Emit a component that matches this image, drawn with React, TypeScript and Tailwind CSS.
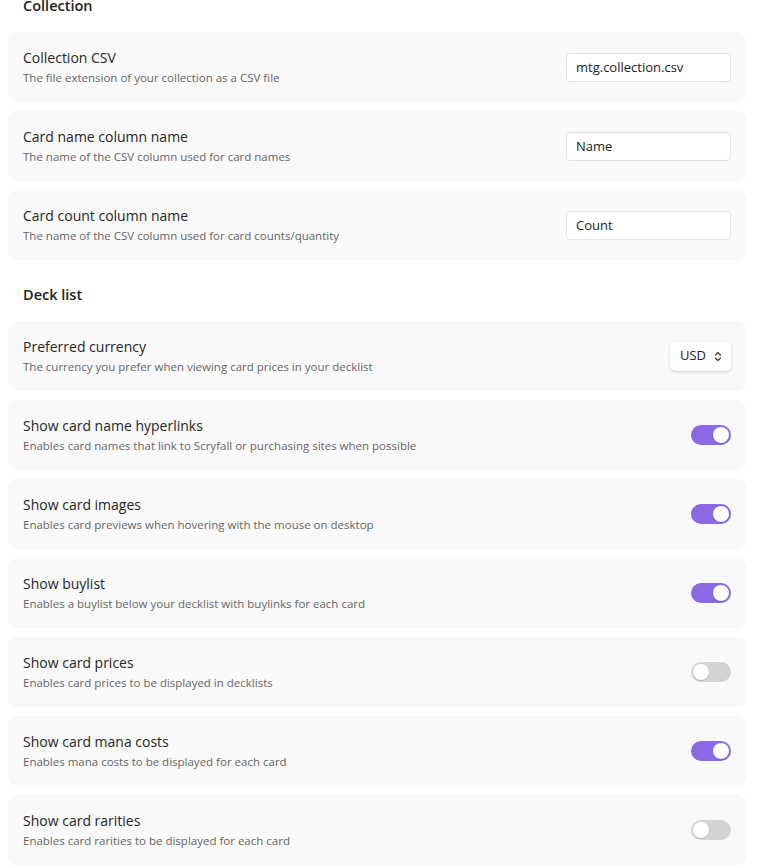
import { useState } from 'react';

type Row =
  | { kind: 'text'; title: string; desc: string; value: string }
  | { kind: 'select'; title: string; desc: string; value: string }
  | { kind: 'toggle'; title: string; desc: string; on: boolean };

const collectionRows: Row[] = [
  { kind: 'text', title: 'Collection CSV', desc: 'The file extension of your collection as a CSV file', value: 'mtg.collection.csv' },
  { kind: 'text', title: 'Card name column name', desc: 'The name of the CSV column used for card names', value: 'Name' },
  { kind: 'text', title: 'Card count column name', desc: 'The name of the CSV column used for card counts/quantity', value: 'Count' },
];

const deckRows: Row[] = [
  { kind: 'select', title: 'Preferred currency', desc: 'The currency you prefer when viewing card prices in your decklist', value: 'USD' },
  { kind: 'toggle', title: 'Show card name hyperlinks', desc: 'Enables card names that link to Scryfall or purchasing sites when possible', on: true },
  { kind: 'toggle', title: 'Show card images', desc: 'Enables card previews when hovering with the mouse on desktop', on: true },
  { kind: 'toggle', title: 'Show buylist', desc: 'Enables a buylist below your decklist with buylinks for each card', on: true },
  { kind: 'toggle', title: 'Show card prices', desc: 'Enables card prices to be displayed in decklists', on: false },
  { kind: 'toggle', title: 'Show card mana costs', desc: 'Enables mana costs to be displayed for each card', on: true },
  { kind: 'toggle', title: 'Show card rarities', desc: 'Enables card rarities to be displayed for each card', on: false },
];

const Toggle = ({ initial }: { initial: boolean }) => {
  const [on, setOn] = useState(initial);
  return (
    <button
      onClick={() => setOn(!on)}
      className={`relative w-[40px] h-[20px] rounded-full transition-colors ${on ? 'bg-[#8b68e4]' : 'bg-[#d4d4d4]'}`}
    >
      <span
        className={`absolute top-[2px] w-[16px] h-[16px] rounded-full bg-white shadow-[0_1px_1px_rgba(0,0,0,0.15)] transition-all ${on ? 'left-[22px]' : 'left-[2px]'}`}
      />
    </button>
  );
};

const Control = ({ row }: { row: Row }) => {
  if (row.kind === 'text') {
    return (
      <input
        defaultValue={row.value}
        className="w-[165px] h-[29px] px-[9px] bg-white border border-[#e3e3e3] rounded-[4px] text-[13px] text-[#222] outline-none"
      />
    );
  }
  if (row.kind === 'select') {
    return (
      <div className="flex items-center gap-[8px] h-[29px] pl-[10px] pr-[9px] bg-white rounded-[5px] shadow-[0_1px_3px_rgba(0,0,0,0.18)] text-[13px] text-[#222]">
        <span>{row.value}</span>
        <svg width="8" height="11" viewBox="0 0 8 11" fill="none" stroke="#444" strokeWidth="1.3" strokeLinecap="round" strokeLinejoin="round">
          <path d="M1.5 4 L4 1.5 L6.5 4" />
          <path d="M1.5 7 L4 9.5 L6.5 7" />
        </svg>
      </div>
    );
  }
  return <Toggle initial={row.on} />;
};

const SettingRow = ({ row }: { row: Row }) => (
  <div className="h-[70px] rounded-[9px] bg-[#f9f9f9] flex items-center justify-between pl-[15px] pr-[15px]">
    <div className="flex flex-col gap-[3px] pb-[2px]">
      <div className="text-[14px] leading-[19px] text-[#262626]">{row.title}</div>
      <div className="text-[11.5px] leading-[15px] text-[#666]">{row.desc}</div>
    </div>
    <Control row={row} />
  </div>
);

export default function App() {
  return (
    <div className="min-h-[868px] bg-white font-['Open_Sans',sans-serif]">
      <div className="w-[738px] ml-[8px]">
        <h2 className="pl-[15px] text-[14.5px] leading-[12px] font-semibold text-[#222]">Collection</h2>
        <div className="mt-[20px] flex flex-col gap-[9px]">
          {collectionRows.map(r => <SettingRow key={r.title} row={r} />)}
        </div>
        <h2 className="pl-[15px] mt-[25px] mb-[16px] text-[14.5px] leading-[20px] font-semibold text-[#222]">Deck list</h2>
        <div className="flex flex-col gap-[9px]">
          {deckRows.map(r => <SettingRow key={r.title} row={r} />)}
        </div>
      </div>
    </div>
  );
}
